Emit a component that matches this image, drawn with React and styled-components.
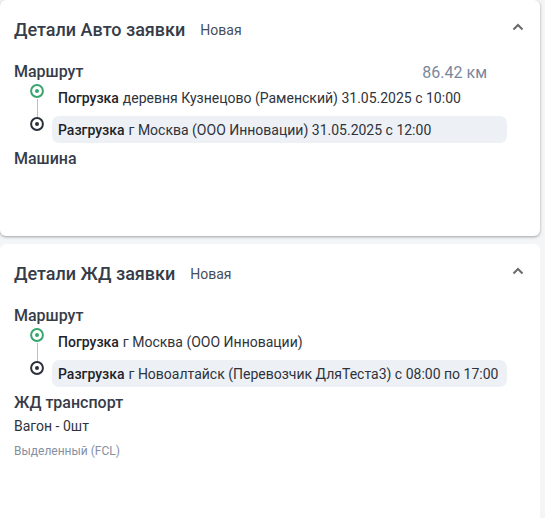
import React from 'react'
import styled, { createGlobalStyle } from 'styled-components'

const GlobalStyle = createGlobalStyle`
  html, body {
    margin: 0;
    padding: 0;
    background: #f4f5f7;
    font-family: Roboto, "Noto Sans", "Liberation Sans", sans-serif;
  }
`

const Page = styled.div`
  display: flex;
  flex-direction: column;
  gap: 8px;
  padding-right: 5px;
  min-height: 518px;
`

const Card = styled.section`
  background: #fff;
  border-radius: 6px;
  box-shadow: ${p => (p.$raised ? '0 1px 3px rgba(0, 0, 0, 0.35)' : 'none')};
  padding: 18px 16px 0 14px;
  height: ${p => p.$height}px;
  box-sizing: border-box;
`

const Header = styled.div`
  display: flex;
  align-items: center;
  height: 24px;
`

const Title = styled.h2`
  margin: 0;
  font-size: 18px;
  font-weight: 500;
  color: #363c48;
  line-height: 24px;
`

const Status = styled.span`
  margin-left: ${p => p.$gap}px;
  font-size: 14px;
  color: #474d59;
`

const Toggle = styled.button`
  margin-left: auto;
  border: none;
  background: none;
  padding: 0;
  display: flex;
  color: #6a6a6a;
  cursor: pointer;
  transform: translateY(-3px);
`

const SectionHead = styled.div`
  display: flex;
  justify-content: space-between;
  align-items: center;
  margin-top: ${p => p.$top}px;
  padding-right: 37px;
`

const SectionTitle = styled.h3`
  margin: ${p => p.$top || 0}px 0 0;
  font-size: 16px;
  font-weight: 500;
  line-height: 22px;
  color: #363c48;
`

const Distance = styled.span`
  font-size: 16px;
  color: #7b879b;
`

const Route = styled.div`
  display: grid;
  grid-template-columns: 14px 1fr;
  column-gap: 8px;
  row-gap: 5px;
  padding-left: 16px;
  padding-right: 17px;
  margin-top: 1px;
  margin-bottom: 5px;
`

const Marker = styled.div`
  position: relative;
  display: flex;
  justify-content: center;
  padding-top: ${p => p.$offset}px;
  color: ${p => p.$color};

  &::after {
    content: '';
    display: ${p => (p.$line ? 'block' : 'none')};
    position: absolute;
    left: 6.5px;
    top: ${p => p.$offset + 15}px;
    width: 1px;
    height: 20px;
    background: #b9bec7;
  }
`

const Stop = styled.div`
  height: 27px;
  display: flex;
  align-items: center;
  padding: 0 6px;
  border-radius: 7px;
  background: ${p => (p.$active ? '#edf1f5' : 'transparent')};
  font-size: 14px;
  color: #2f333b;
  white-space: nowrap;

  b {
    font-weight: 500;
    color: #1f2329;
    margin-right: 4px;
  }
`

const Text = styled.div`
  font-size: ${p => p.$size}px;
  color: ${p => p.$color};
  line-height: ${p => p.$lh}px;
  margin-top: ${p => p.$top || 0}px;
`

const Dot = () => (
  <svg width="14" height="14" viewBox="0 0 14 14" fill="none">
    <circle cx="7" cy="7" r="5.9" stroke="currentColor" strokeWidth="2" />
    <circle cx="7" cy="7" r="2" fill="currentColor" />
  </svg>
)

const Chevron = () => (
  <svg width="12" height="8" viewBox="0 0 12 8" fill="none">
    <path d="M1.5 6.5 L6 2 L10.5 6.5" stroke="currentColor" strokeWidth="2" />
  </svg>
)

const RouteList = ({ stops }) => (
  <Route>
    {stops.map((s, i) => (
      <React.Fragment key={i}>
        <Marker
          $offset={i === 0 ? 0 : 1}
          $color={i === 0 ? '#37a56c' : '#2b303b'}
          $line={i < stops.length - 1}
        >
          <Dot />
        </Marker>
        <Stop $active={i === stops.length - 1}>
          <b>{s.kind}</b>
          {s.text}
        </Stop>
      </React.Fragment>
    ))}
  </Route>
)

const App = () => (
  <>
    <GlobalStyle />
    <Page>
      <Card $raised $height={236}>
        <Header>
          <Title>Детали Авто заявки</Title>
          <Status $gap={15}>Новая</Status>
          <Toggle aria-label="Свернуть">
            <Chevron />
          </Toggle>
        </Header>
        <SectionHead $top={19}>
          <SectionTitle>Маршрут</SectionTitle>
          <Distance>86.42 км</Distance>
        </SectionHead>
        <RouteList
          stops={[
            { kind: 'Погрузка', text: 'деревня Кузнецово (Раменский) 31.05.2025 с 10:00' },
            { kind: 'Разгрузка', text: 'г Москва (ООО Инновации) 31.05.2025 с 12:00' },
          ]}
        />
        <SectionTitle $top={1}>Машина</SectionTitle>
      </Card>

      <Card $height={280}>
        <Header>
          <Title>Детали ЖД заявки</Title>
          <Status $gap={15}>Новая</Status>
          <Toggle aria-label="Свернуть">
            <Chevron />
          </Toggle>
        </Header>
        <SectionHead $top={19}>
          <SectionTitle>Маршрут</SectionTitle>
        </SectionHead>
        <RouteList
          stops={[
            { kind: 'Погрузка', text: 'г Москва (ООО Инновации)' },
            { kind: 'Разгрузка', text: 'г Новоалтайск (Перевозчик ДляТеста3) с 08:00 по 17:00' },
          ]}
        />
        <SectionTitle $top={1}>ЖД транспорт</SectionTitle>
        <Text $size={14} $lh={20} $color="#2f333b" $top={2}>Вагон - 0шт</Text>
        <Text $size={12} $lh={16} $color="#8590a3" $top={7}>Выделенный (FCL)</Text>
      </Card>
    </Page>
  </>
)

export default App
